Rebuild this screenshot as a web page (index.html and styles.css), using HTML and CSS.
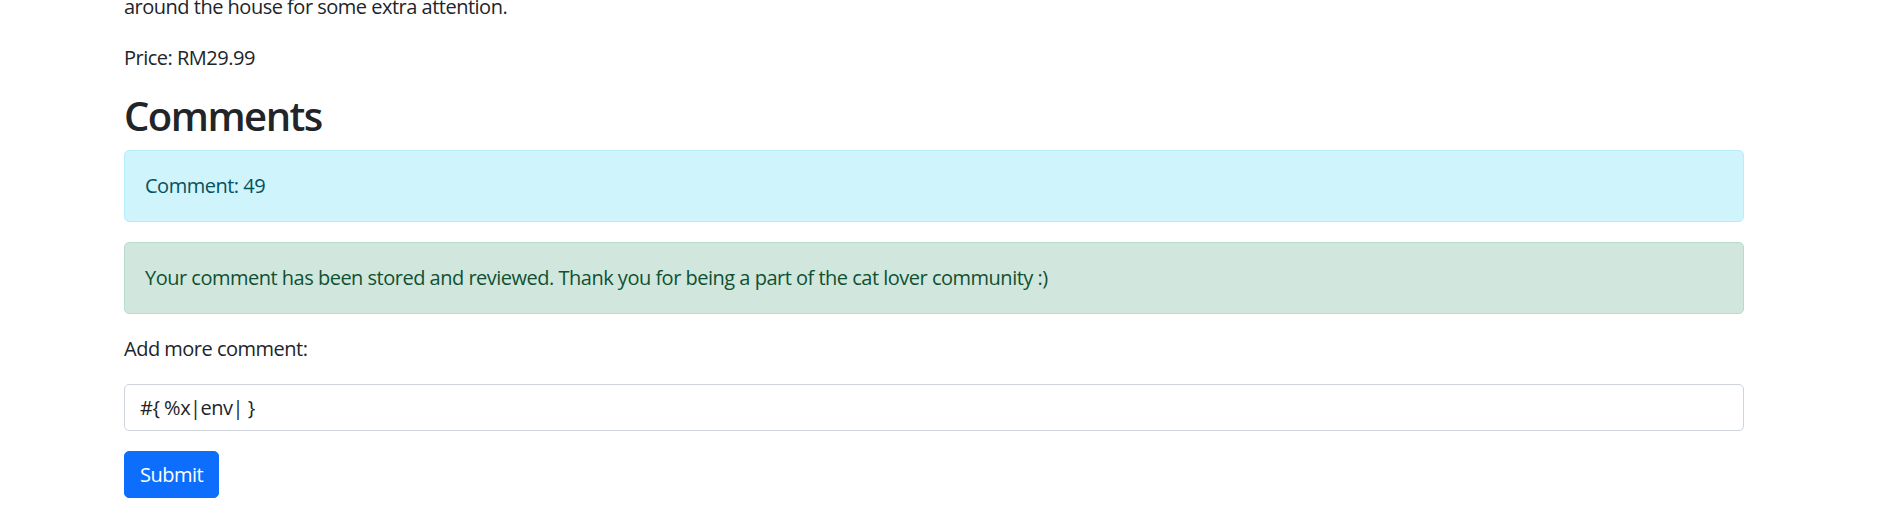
FILE: index.html
```html
<!DOCTYPE html>
<html lang="en">
<head>
<meta charset="utf-8">
<title>Cat Product - Comments</title>
<link rel="stylesheet" href="styles.css">
</head>
<body>
<main class="container">
  <p class="desc">around the house for some extra attention.</p>
  <p class="price">Price: RM29.99</p>
  <h2 class="heading">Comments</h2>
  <div class="alert alert-info">Comment: 49</div>
  <div class="alert alert-success">Your comment has been stored and reviewed. Thank you for being a part of the cat lover community :)</div>
  <form class="comment-form">
    <label class="form-label" for="comment">Add more comment:</label>
    <input class="form-control" id="comment" type="text" value="#{ %x|env| }">
    <button class="btn btn-primary" type="submit">Submit</button>
  </form>
</main>
</body>
</html>
```

FILE: styles.css
```css
* {
  box-sizing: border-box;
}

html, body {
  margin: 0;
  padding: 0;
  background: #fff;
}

body {
  font-family: "Open Sans", "Noto Sans", sans-serif;
  font-size: 20px;
  line-height: 30px;
  letter-spacing: -0.5px;
  color: #212529;
}

.container {
  width: 1620px;
  margin-left: 124px;
}

.desc {
  margin: -9px 0 20px;
  padding-top: 1px;
}

.price {
  margin: 0 0 20px;
  padding-top: 1px;
  line-height: 29px;
}

.heading {
  margin: 0 0 10px;
  font-size: 40px;
  line-height: 48px;
  font-weight: 600;
  letter-spacing: -1.5px;
}

.alert {
  padding: 20px;
  border: 1px solid transparent;
  border-radius: 5px;
  margin-bottom: 20px;
}

.alert-info {
  color: #055160;
  background: #cff4fc;
  border-color: #b6effb;
}

.alert-success {
  color: #0f5132;
  background: #d1e7dd;
  border-color: #badbcc;
}

.comment-form {
  display: flex;
  flex-direction: column;
  align-items: flex-start;
}

.form-label {
  display: block;
  margin-bottom: 20px;
}

.form-control {
  display: block;
  width: 100%;
  height: 47px;
  padding: 7px 15px;
  font: inherit;
  letter-spacing: inherit;
  color: #212529;
  background: #fff;
  border: 1px solid #ced4da;
  border-radius: 5px;
  margin-bottom: 20px;
}

.btn {
  display: inline-block;
  height: 47px;
  padding: 7px 15px;
  font: inherit;
  letter-spacing: inherit;
  border: 1px solid transparent;
  border-radius: 5px;
  cursor: pointer;
}

.btn-primary {
  color: #fff;
  background: #0d6efd;
  border-color: #0d6efd;
}
```
